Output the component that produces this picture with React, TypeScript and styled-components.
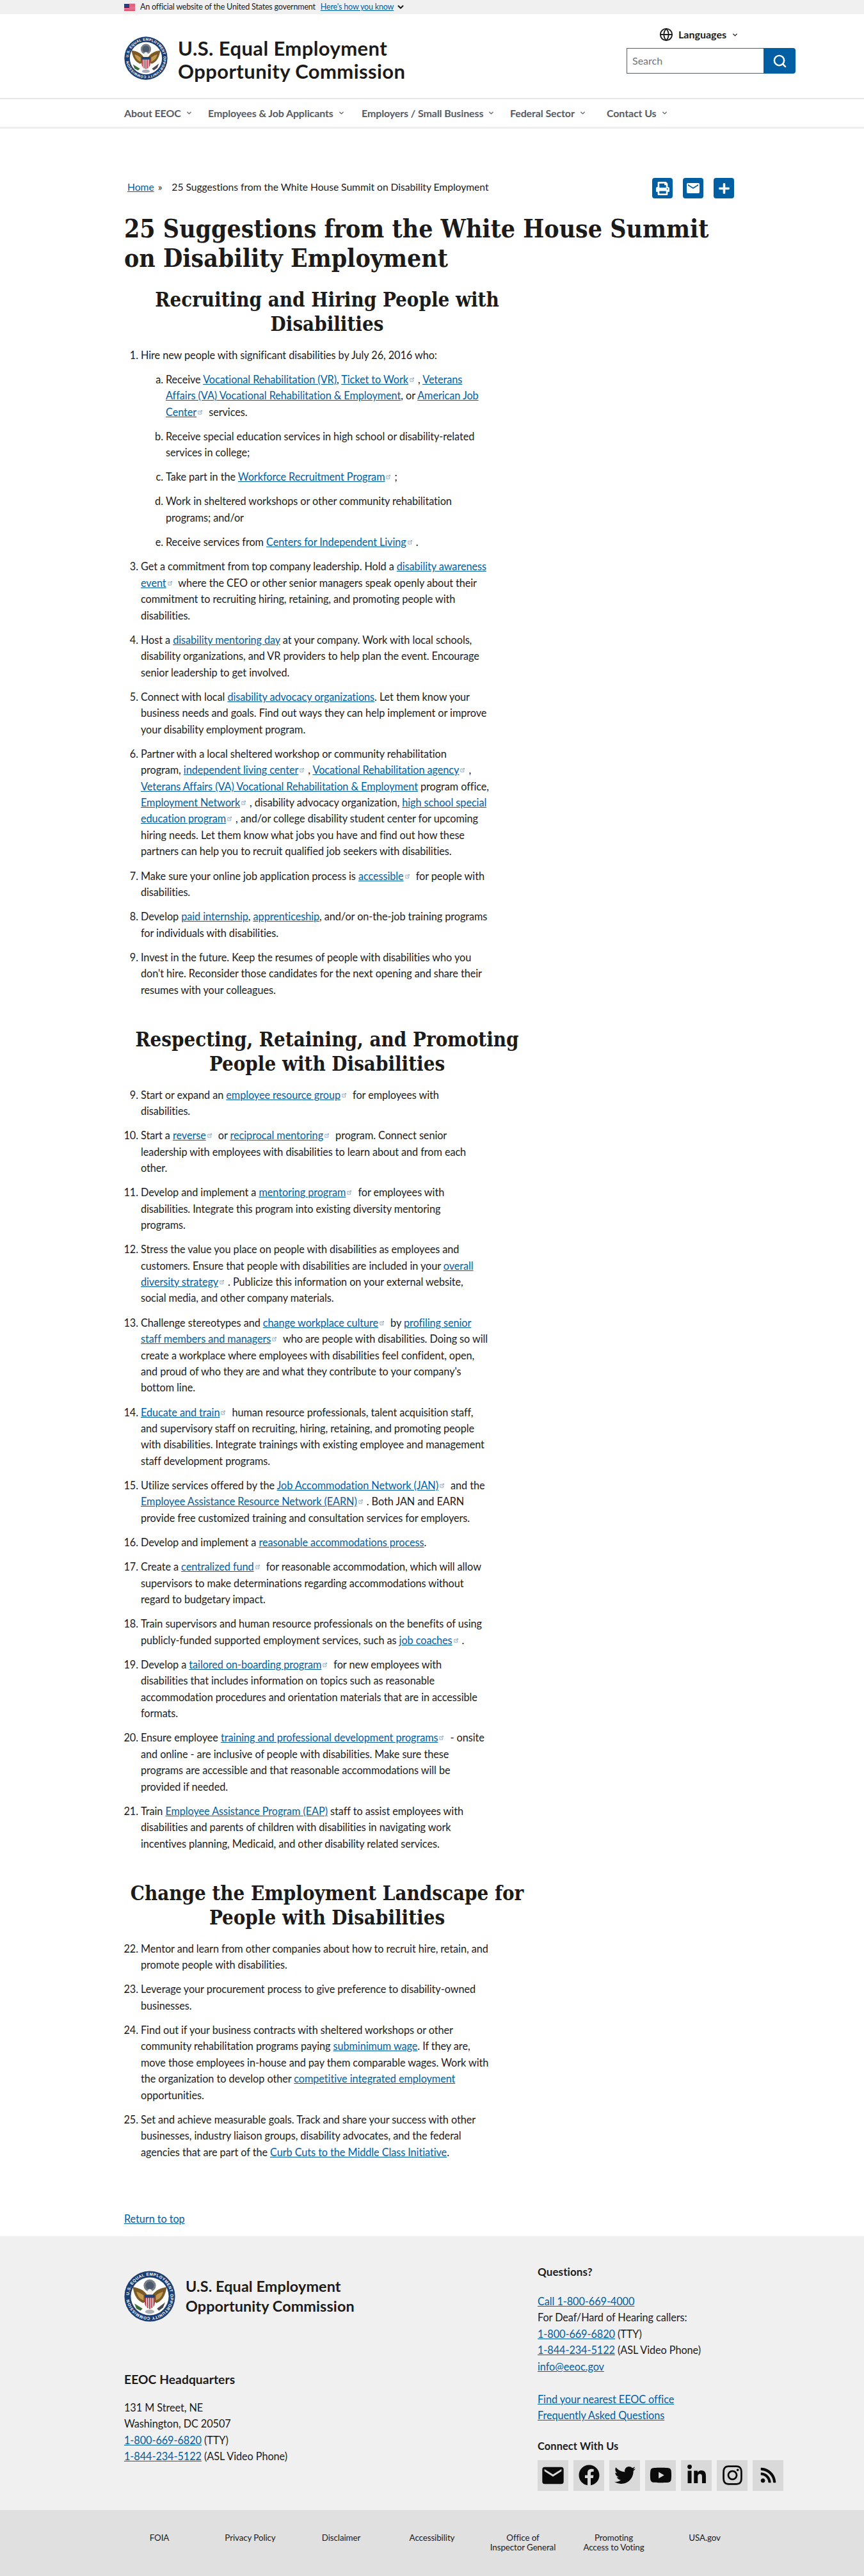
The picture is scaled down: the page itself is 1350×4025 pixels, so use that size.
import styled, { createGlobalStyle } from "styled-components";
import { useId, type ReactNode } from "react";
import { ChevronDown, Globe, Search } from "lucide-react";
import { FaFacebook, FaInstagram, FaLinkedinIn, FaPlus, FaPrint, FaRss, FaTwitter, FaYoutube } from "react-icons/fa";
import { MdEmail } from "react-icons/md";

const sans = `"Lato", "Noto Sans", sans-serif`;
const serif = `"DejaVu Serif Condensed", "DejaVu Serif", serif`;
const blue = "#005ea2";
const ink = "#1b1b1b";

const GlobalStyle = createGlobalStyle`
  html, body {
    margin: 0;
    padding: 0;
    background: white;
  }
  body {
    font-family: ${sans};
    color: ${ink};
    font-size: 16.3px;
    line-height: 25.44px;
    letter-spacing: -0.08px;
  }
`;

const Banner = styled.div`
  height: 22px;
  background: #f0f0f0;
  padding-left: 194px;
  display: flex;
  align-items: center;
  font-size: 12.6px;
  letter-spacing: -0.22px;
`;
const BannerText = styled.span`
  margin-left: 8px;
`;
const BannerLink = styled.a`
  margin-left: 8px;
  color: ${blue};
  text-decoration: underline;
`;

const Header = styled.header`
  height: 133px;
  box-sizing: border-box;
  padding: 21px 107px 0 194px;
  display: flex;
  justify-content: space-between;
  border-bottom: 2px solid #e6e6e6;
`;
const Brand = styled.div`
  display: flex;
  gap: 16px;
  padding-top: 14px;
`;
const BrandName = styled.div`
  font-size: 31px;
  line-height: 36px;
  font-weight: 700;
  letter-spacing: 0.4px;
`;
const Tools = styled.div`
  display: flex;
  flex-direction: column;
  align-items: flex-end;
`;
const Languages = styled.div`
  display: flex;
  align-items: center;
  font-weight: 700;
  font-size: 16px;
  letter-spacing: 0;
  height: 22px;
  margin: 0 89px 10px 0;
  gap: 8px;
`;
const SearchBox = styled.div`
  margin-top: 0;
  display: flex;
  height: 40px;
`;
const SearchInput = styled.div`
  width: 214px;
  box-sizing: border-box;
  border: 1px solid #565c65;
  border-right: 0;
  padding-left: 8px;
  line-height: 38px;
  color: #71767a;
  font-size: 16px;
  letter-spacing: 0;
`;
const SearchButton = styled.div`
  width: 50px;
  background: ${blue};
  color: white;
  border-radius: 0 4px 4px 0;
  display: flex;
  align-items: center;
  justify-content: center;
`;

const Nav = styled.nav`
  height: 46px;
  box-sizing: border-box;
  border-bottom: 3px solid #eeeeee;
  padding-left: 194px;
  display: grid;
  grid-template-columns: 131px 240px 232px 151px auto;
  align-items: center;
  color: #565c65;
  font-weight: 700;
  font-size: 16px;
  letter-spacing: -0.12px;
`;
const NavItem = styled.div`
  display: flex;
  align-items: center;
  gap: 7px;
`;

const Main = styled.main`
  padding: 0 194px;
`;
const CrumbRow = styled.div`
  padding-top: 77px;
  display: flex;
  justify-content: space-between;
  height: 32px;
  padding-right: 9px;
`;
const Crumbs = styled.div`
  display: flex;
  align-items: center;
  padding-left: 5px;
  height: 30px;
  font-size: 15.7px;
  letter-spacing: -0.05px;
`;
const CrumbSep = styled.span`
  margin: 0 15px 0 6px;
`;
const A = styled.a`
  color: ${blue};
  text-decoration: underline;
`;
const Share = styled.div`
  display: flex;
  gap: 16px;
`;
const ShareButton = styled.div`
  width: 32px;
  height: 32px;
  border-radius: 4px;
  background: ${blue};
  color: white;
  display: flex;
  align-items: center;
  justify-content: center;
`;
const Title = styled.h1`
  margin: 24px 0 0;
  font-family: ${serif};
  font-weight: 700;
  font-size: 38.9px;
  line-height: 46px;
  letter-spacing: 0;
`;
const Heading = styled.h2<{ $top: number }>`
  margin: ${p => p.$top}px 0 0;
  width: 634px;
  text-align: center;
  font-family: ${serif};
  font-weight: 700;
  font-size: 31px;
  line-height: 38px;
  letter-spacing: 0;
`;
const List = styled.ol`
  margin: 16.5px 0 0;
  padding-left: 26px;
  white-space: nowrap;
`;
const Item = styled.li`
  margin-bottom: 12.72px;
`;
const SubList = styled.ol`
  margin: 12.72px 0 0;
  padding-left: 39px;
  list-style-type: lower-alpha;
`;
const ExtMark = styled.svg`
  width: 7px;
  height: 7px;
  margin: 0 6px 0 2px;
  vertical-align: 2px;
`;
const ReturnTop = styled.div`
  margin-top: 79px;
  padding-bottom: 14.6px;
`;

const Footer = styled.footer`
  background: #f0f0f0;
  padding: 42px 0 30.5px 194px;
  display: grid;
  grid-template-columns: 646px auto;
`;
const FooterLeft = styled.div`
  padding-top: 12px;
`;
const FooterBrand = styled.div`
  display: flex;
  align-items: center;
  gap: 16px;
`;
const FooterName = styled.div`
  font-size: 23.4px;
  line-height: 31px;
  font-weight: 700;
  letter-spacing: 0.1px;
`;
const FooterHeading = styled.h3<{ $top?: number; $size: number }>`
  margin: ${p => p.$top ?? 0}px 0 0;
  font-size: ${p => p.$size}px;
  line-height: 28px;
  font-weight: 700;
  letter-spacing: 0.1px;
`;
const FooterLines = styled.div<{ $top: number }>`
  margin-top: ${p => p.$top}px;
`;
const Social = styled.div`
  display: flex;
  gap: 8px;
  margin-top: 8px;
`;
const SocialTile = styled.div`
  width: 48px;
  height: 48px;
  background: #d9d9d9;
  color: #0b0b0b;
  display: flex;
  align-items: center;
  justify-content: center;
`;
const BottomBar = styled.div`
  height: 103px;
  box-sizing: border-box;
  background: #e0e0e0;
  padding-top: 36px;
  display: grid;
  grid-template-columns: repeat(7, 142px);
  justify-content: center;
  font-size: 13.4px;
  line-height: 15px;
  letter-spacing: -0.1px;
  text-align: center;
`;

function Flag() {
  const stripes = [0, 2, 4, 6, 8, 10];
  return (
    <svg width="17" height="11" viewBox="0 0 17 11">
      <rect width="17" height="11" fill="#fff" />
      {stripes.map(y => <rect key={y} y={y} width="17" height="1" fill="#c8102e" />)}
      <rect width="8" height="6" fill="#2a3f7e" />
    </svg>
  );
}

function Seal({ size }: { size: number }) {
  const id = useId();
  return (
    <svg width={size} height={size} viewBox="0 0 100 100" style={{ flexShrink: 0 }}>
      <circle cx="50" cy="50" r="49.5" fill="#1c3f73" />
      <circle cx="50" cy="50" r="37" fill="#fff" />
      <path id={id} d="M50 50 m-40.5 0 a40.5 40.5 0 1 1 81 0 a40.5 40.5 0 1 1 -81 0" fill="none" />
      <text fontSize="8" fill="#fff" fontFamily="Liberation Sans, sans-serif" fontWeight="700">
        <textPath href={`#${id}`} textLength="246" startOffset="2">U.S. EQUAL EMPLOYMENT OPPORTUNITY COMMISSION</textPath>
      </text>
      <circle cx="50" cy="29" r="12" fill="#7b7f86" />
      <circle cx="50" cy="29" r="8" fill="#4d5a6e" />
      <path d="M44 46 C36 36 28 34 17 32 C19 46 24 58 37 63 L44 58 Z" fill="#7a5a26" />
      <path d="M56 46 C64 36 72 34 83 32 C81 46 76 58 63 63 L56 58 Z" fill="#7a5a26" />
      <path d="M38 48 C32 44 28 42 24 41 C26 50 30 55 38 58 Z" fill="#c49a4e" />
      <path d="M62 48 C68 44 72 42 76 41 C74 50 70 55 62 58 Z" fill="#c49a4e" />
      <path d="M46 38 Q50 33 54 38 L55 46 L45 46 Z" fill="#f1efe6" />
      <path d="M40 47 H60 V62 Q60 72 50 75 Q40 72 40 62 Z" fill="#b23a48" />
      <path d="M40 47 H60 V53 H40 Z" fill="#26406f" />
      <path d="M44 53 V72 M48 53 V75 M52 53 V75 M56 53 V72" stroke="#fff" strokeWidth="1.6" />
      <path d="M20 64 L36 74 L32 78 L24 74 Z" fill="#3d6b3a" />
      <path d="M80 62 L64 74 L68 78 L76 72 Z" fill="#4a4a50" />
      <ellipse cx="50" cy="80" rx="9" ry="4" fill="#a9adb3" />
    </svg>
  );
}

function Ext() {
  return (
    <ExtMark viewBox="0 0 8 8" fill="none" stroke="#7f9fbd" strokeWidth="1">
      <path d="M5 1.5H1v5.5h5.5V3.5" />
      <path d="M3.5 4.5L7.5 .5M5.2.5h2.3v2.3" />
    </ExtMark>
  );
}

function X({ children }: { children: ReactNode }) {
  return <><A href="#">{children}</A><Ext /></>;
}

const socials = [
  <MdEmail key="m" size={40} />,
  <FaFacebook key="f" size={33} />,
  <FaTwitter key="t" size={33} />,
  <FaYoutube key="y" size={35} />,
  <FaLinkedinIn key="l" size={33} />,
  <FaInstagram key="i" size={35} />,
  <FaRss key="r" size={27} />,
];

function App() {
  return (
    <>
      <GlobalStyle />
      <Banner>
        <Flag />
        <BannerText>An official website of the United States government</BannerText>
        <BannerLink href="#">Here's how you know</BannerLink>
        <ChevronDown size={14} strokeWidth={3.5} style={{ marginLeft: 4 }} />
      </Banner>
      <Header>
        <Brand>
          <Seal size={68} />
          <BrandName>U.S. Equal Employment<br />Opportunity Commission</BrandName>
        </Brand>
        <Tools>
          <Languages>
            <Globe size={22} strokeWidth={2} />
            Languages
            <ChevronDown size={11} strokeWidth={3} />
          </Languages>
          <SearchBox>
            <SearchInput>Search</SearchInput>
            <SearchButton><Search size={23} strokeWidth={2.6} /></SearchButton>
          </SearchBox>
        </Tools>
      </Header>
      <Nav>
        {["About EEOC", "Employees & Job Applicants", "Employers / Small Business", "Federal Sector", "Contact Us"].map(n => (
          <NavItem key={n}>{n}<ChevronDown size={11} strokeWidth={3} /></NavItem>
        ))}
      </Nav>
      <Main>
        <CrumbRow>
          <Crumbs>
            <A href="#">Home</A><CrumbSep>»</CrumbSep>25 Suggestions from the White House Summit on Disability Employment
          </Crumbs>
          <Share>
            <ShareButton><FaPrint size={21} /></ShareButton>
            <ShareButton><MdEmail size={24} /></ShareButton>
            <ShareButton><FaPlus size={19} /></ShareButton>
          </Share>
        </CrumbRow>
        <Title>25 Suggestions from the White House Summit<br />on Disability Employment</Title>

        <Heading $top={23}>Recruiting and Hiring People with<br />Disabilities</Heading>
        <List>
          <Item>
            Hire new people with significant disabilities by July 26, 2016 who:
            <SubList>
              <Item>Receive <A href="#">Vocational Rehabilitation (VR)</A>, <X>Ticket to Work</X>, <A href="#">Veterans<br />Affairs (VA) Vocational Rehabilitation &amp; Employment</A>, or <X>American Job<br />Center</X> services.</Item>
              <Item>Receive special education services in high school or disability-related<br />services in college;</Item>
              <Item>Take part in the <X>Workforce Recruitment Program</X>;</Item>
              <Item>Work in sheltered workshops or other community rehabilitation<br />programs; and/or</Item>
              <Item>Receive services from <X>Centers for Independent Living</X>.</Item>
            </SubList>
          </Item>
          <Item value={3}>Get a commitment from top company leadership. Hold a <X>disability awareness<br />event</X> where the CEO or other senior managers speak openly about their<br />commitment to recruiting hiring, retaining, and promoting people with<br />disabilities.</Item>
          <Item>Host a <A href="#">disability mentoring day</A> at your company. Work with local schools,<br />disability organizations, and VR providers to help plan the event. Encourage<br />senior leadership to get involved.</Item>
          <Item>Connect with local <A href="#">disability advocacy organizations</A>. Let them know your<br />business needs and goals. Find out ways they can help implement or improve<br />your disability employment program.</Item>
          <Item>Partner with a local sheltered workshop or community rehabilitation<br />program, <X>independent living center</X>, <X>Vocational Rehabilitation agency</X>,<br /><A href="#">Veterans Affairs (VA) Vocational Rehabilitation &amp; Employment</A> program office,<br /><X>Employment Network</X>, disability advocacy organization, <X>high school special<br />education program</X>, and/or college disability student center for upcoming<br />hiring needs. Let them know what jobs you have and find out how these<br />partners can help you to recruit qualified job seekers with disabilities.</Item>
          <Item>Make sure your online job application process is <X>accessible</X> for people with<br />disabilities.</Item>
          <Item>Develop <A href="#">paid internship</A>, <A href="#">apprenticeship</A>, and/or on-the-job training programs<br />for individuals with disabilities.</Item>
          <Item>Invest in the future. Keep the resumes of people with disabilities who you<br />don't hire. Reconsider those candidates for the next opening and share their<br />resumes with your colleagues.</Item>
        </List>

        <Heading $top={46}>Respecting, Retaining, and Promoting<br />People with Disabilities</Heading>
        <List start={9}>
          <Item>Start or expand an <X>employee resource group</X> for employees with<br />disabilities.</Item>
          <Item>Start a <X>reverse</X> or <X>reciprocal mentoring</X> program. Connect senior<br />leadership with employees with disabilities to learn about and from each<br />other.</Item>
          <Item>Develop and implement a <X>mentoring program</X> for employees with<br />disabilities. Integrate this program into existing diversity mentoring<br />programs.</Item>
          <Item>Stress the value you place on people with disabilities as employees and<br />customers. Ensure that people with disabilities are included in your <X>overall<br />diversity strategy</X>. Publicize this information on your external website,<br />social media, and other company materials.</Item>
          <Item>Challenge stereotypes and <X>change workplace culture</X> by <X>profiling senior<br />staff members and managers</X> who are people with disabilities. Doing so will<br />create a workplace where employees with disabilities feel confident, open,<br />and proud of who they are and what they contribute to your company's<br />bottom line.</Item>
          <Item><X>Educate and train</X> human resource professionals, talent acquisition staff,<br />and supervisory staff on recruiting, hiring, retaining, and promoting people<br />with disabilities. Integrate trainings with existing employee and management<br />staff development programs.</Item>
          <Item>Utilize services offered by the <X>Job Accommodation Network (JAN)</X> and the<br /><X>Employee Assistance Resource Network (EARN)</X>. Both JAN and EARN<br />provide free customized training and consultation services for employers.</Item>
          <Item>Develop and implement a <A href="#">reasonable accommodations process</A>.</Item>
          <Item>Create a <X>centralized fund</X> for reasonable accommodation, which will allow<br />supervisors to make determinations regarding accommodations without<br />regard to budgetary impact.</Item>
          <Item>Train supervisors and human resource professionals on the benefits of using<br />publicly-funded supported employment services, such as <X>job coaches</X>.</Item>
          <Item>Develop a <X>tailored on-boarding program</X> for new employees with<br />disabilities that includes information on topics such as reasonable<br />accommodation procedures and orientation materials that are in accessible<br />formats.</Item>
          <Item>Ensure employee <X>training and professional development programs</X> - onsite<br />and online - are inclusive of people with disabilities. Make sure these<br />programs are accessible and that reasonable accommodations will be<br />provided if needed.</Item>
          <Item>Train <A href="#">Employee Assistance Program (EAP)</A> staff to assist employees with<br />disabilities and parents of children with disabilities in navigating work<br />incentives planning, Medicaid, and other disability related services.</Item>
        </List>

        <Heading $top={46}>Change the Employment Landscape for<br />People with Disabilities</Heading>
        <List start={22}>
          <Item>Mentor and learn from other companies about how to recruit hire, retain, and<br />promote people with disabilities.</Item>
          <Item>Leverage your procurement process to give preference to disability-owned<br />businesses.</Item>
          <Item>Find out if your business contracts with sheltered workshops or other<br />community rehabilitation programs paying <A href="#">subminimum wage</A>. If they are,<br />move those employees in-house and pay them comparable wages. Work with<br />the organization to develop other <A href="#">competitive integrated employment</A><br />opportunities.</Item>
          <Item>Set and achieve measurable goals. Track and share your success with other<br />businesses, industry liaison groups, disability advocates, and the federal<br />agencies that are part of the <A href="#">Curb Cuts to the Middle Class Initiative</A>.</Item>
        </List>
        <ReturnTop><A href="#">Return to top</A></ReturnTop>
      </Main>

      <Footer>
        <FooterLeft>
          <FooterBrand>
            <Seal size={80} />
            <FooterName>U.S. Equal Employment<br />Opportunity Commission</FooterName>
          </FooterBrand>
          <FooterHeading $top={76} $size={19.2}>EEOC Headquarters</FooterHeading>
          <FooterLines $top={17}>
            131 M Street, NE<br />
            Washington, DC 20507<br />
            <A href="#">1-800-669-6820</A> (TTY)<br />
            <A href="#">1-844-234-5122</A> (ASL Video Phone)
          </FooterLines>
        </FooterLeft>
        <div>
          <FooterHeading $size={17}>Questions?</FooterHeading>
          <FooterLines $top={19}>
            <A href="#">Call 1-800-669-4000</A><br />
            For Deaf/Hard of Hearing callers:<br />
            <A href="#">1-800-669-6820</A> (TTY)<br />
            <A href="#">1-844-234-5122</A> (ASL Video Phone)<br />
            <A href="#">info@eeoc.gov</A><br />
            <br />
            <A href="#">Find your nearest EEOC office</A><br />
            <A href="#">Frequently Asked Questions</A>
          </FooterLines>
          <FooterHeading $top={21} $size={16.4}>Connect With Us</FooterHeading>
          <Social>
            {socials.map(icon => <SocialTile key={icon.key}>{icon}</SocialTile>)}
          </Social>
        </div>
      </Footer>
      <BottomBar>
        <div>FOIA</div>
        <div>Privacy Policy</div>
        <div>Disclaimer</div>
        <div>Accessibility</div>
        <div>Office of<br />Inspector General</div>
        <div>Promoting<br />Access to Voting</div>
        <div>USA.gov</div>
      </BottomBar>
    </>
  );
}

export default App;
